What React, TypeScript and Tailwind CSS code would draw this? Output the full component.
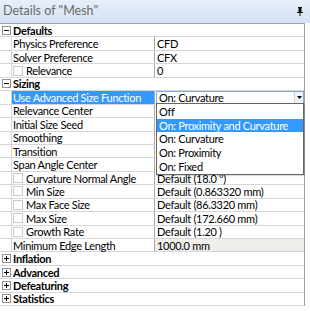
import React from 'react';

type Row =
  | { kind: 'cat'; label: string; open: boolean }
  | { kind: 'prop'; label: string; value: string; check?: boolean; selected?: boolean; readonly?: boolean };

// values hidden under the open dropdown are left blank
const rows: Row[] = [
  { kind: 'cat', label: 'Defaults', open: true },
  { kind: 'prop', label: 'Physics Preference', value: 'CFD' },
  { kind: 'prop', label: 'Solver Preference', value: 'CFX' },
  { kind: 'prop', label: 'Relevance', value: '0', check: true },
  { kind: 'cat', label: 'Sizing', open: true },
  { kind: 'prop', label: 'Use Advanced Size Function', value: 'On: Curvature', selected: true },
  { kind: 'prop', label: 'Relevance Center', value: '' },
  { kind: 'prop', label: 'Initial Size Seed', value: '' },
  { kind: 'prop', label: 'Smoothing', value: '' },
  { kind: 'prop', label: 'Transition', value: '' },
  { kind: 'prop', label: 'Span Angle Center', value: '' },
  { kind: 'prop', label: 'Curvature Normal Angle', value: 'Default (18.0 °)', check: true },
  { kind: 'prop', label: 'Min Size', value: 'Default (0.863320 mm)', check: true },
  { kind: 'prop', label: 'Max Face Size', value: 'Default (86.3320 mm)', check: true },
  { kind: 'prop', label: 'Max Size', value: 'Default (172.660 mm)', check: true },
  { kind: 'prop', label: 'Growth Rate', value: 'Default (1.20 )', check: true },
  { kind: 'prop', label: 'Minimum Edge Length', value: '1000.0 mm', readonly: true },
  { kind: 'cat', label: 'Inflation', open: false },
  { kind: 'cat', label: 'Advanced', open: false },
  { kind: 'cat', label: 'Defeaturing', open: false },
  { kind: 'cat', label: 'Statistics', open: false },
];

const options = ['Off', 'On: Proximity and Curvature', 'On: Curvature', 'On: Proximity', 'On: Fixed'];

function ToggleBox({ open }: { open: boolean }) {
  return (
    <svg width="9" height="9" viewBox="0 0 9 9" className="block">
      <rect x="0.5" y="0.5" width="8" height="8" fill="#fff" stroke="#919191" />
      <line x1="2" y1="4.5" x2="7" y2="4.5" stroke="#000" />
      {!open && <line x1="4.5" y1="2" x2="4.5" y2="7" stroke="#000" />}
    </svg>
  );
}

function CheckBox() {
  return <span className="inline-block w-[10px] h-[10px] border border-[#c9c9c9] bg-white mr-[3px] shrink-0" />;
}

export default function App() {
  return (
    <div
      className="relative w-[310px] h-[311px] bg-white overflow-hidden text-[11px] tracking-[-0.3px] text-black"
      style={{ fontFamily: 'Lato, "Noto Sans", sans-serif' }}
    >
      {/* Title bar */}
      <div className="h-[23px] flex items-center justify-between pl-[3px] pr-[7px] bg-gradient-to-b from-[#e7eff9] to-[#d4e2f2]">
        <span className="text-[12.5px] tracking-normal text-[#6a6a6a] leading-none">Details of "Mesh"</span>
        <svg width="6" height="9" viewBox="0 0 6 9">
          <rect x="1" y="0" width="4" height="1" fill="#111" />
          <rect x="1.5" y="1" width="3" height="4" fill="#111" />
          <rect x="0" y="5" width="6" height="1" fill="#111" />
          <rect x="2.5" y="6" width="1" height="3" fill="#111" />
        </svg>
      </div>

      {/* Grid */}
      <div className="w-[305px] border-r border-[#a0a0a0] border-t border-t-[#a0a0a0]">
        {rows.map((r, i) =>
          r.kind === 'cat' ? (
            <div key={i} className="flex h-[13.45px] border-b border-[#d6d6d6] leading-none">
              <div className="w-[12px] flex items-center justify-center shrink-0">
                <ToggleBox open={r.open} />
              </div>
              <div className="pl-[1px] flex items-center font-bold">{r.label}</div>
            </div>
          ) : (
            <div key={i} className="flex h-[13.45px] border-b border-[#d6d6d6] leading-none">
              <div className="w-[12px] shrink-0 border-r border-[#d6d6d6]" />
              <div
                className={`w-[143px] shrink-0 flex items-center pl-[1px] border-r border-[#a8a8a8] ${
                  r.selected ? 'bg-[#3399ff] text-white' : ''
                }`}
              >
                {r.check && <CheckBox />}
                <span className="whitespace-nowrap">{r.label}</span>
              </div>
              <div
                className={`flex-1 flex items-center pl-[2px] whitespace-nowrap ${r.readonly ? 'bg-[#efeeeb]' : ''}`}
              >
                {r.selected ? (
                  <div className="-ml-[1px] flex-1 h-full flex items-center justify-between border border-[#7aa9dc] pl-[2px]">
                    <span>{r.value}</span>
                    <span className="w-[9px] h-full flex items-center justify-center border-l border-[#cfcfcf] bg-[#f4f4f4]">
                      <svg width="5" height="3" viewBox="0 0 5 3">
                        <path d="M0 0 H5 L2.5 3 Z" fill="#000" />
                      </svg>
                    </span>
                  </div>
                ) : (
                  r.value
                )}
              </div>
            </div>
          )
        )}
      </div>

      {/* Open dropdown list */}
      <div className="absolute left-[156px] top-[103px] w-[148px] bg-white border border-[#646464] py-[1px] leading-none shadow-[1px_1px_1px_rgba(0,0,0,0.15)]">
        {options.map((o, i) => (
          <div
            key={o}
            className={`h-[13.6px] flex items-center pl-[2px] whitespace-nowrap ${
              i === 1 ? 'bg-[#3399ff] text-white' : ''
            }`}
          >
            {o}
          </div>
        ))}
      </div>
    </div>
  );
}
